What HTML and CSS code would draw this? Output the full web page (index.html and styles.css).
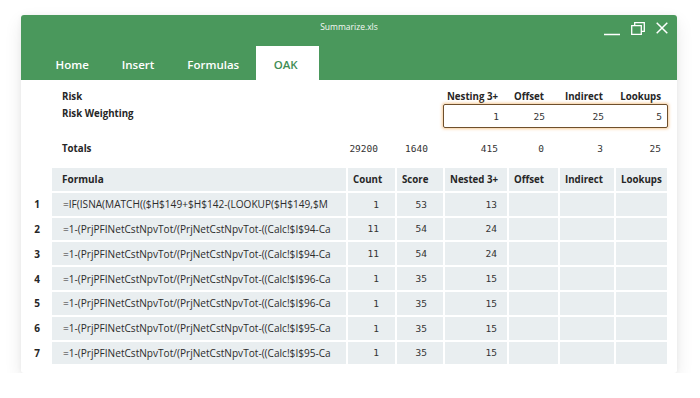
FILE: index.html
```html
<!DOCTYPE html>
<html lang="en">
<head>
<meta charset="utf-8">
<title>Summarize.xls</title>
<link rel="stylesheet" href="styles.css">
</head>
<body>
<div class="window">
  <header class="titlebar">
    <div class="title-row">
      <span></span>
      <span class="title">Summarize.xls</span>
      <div class="controls">
        <svg class="ic-min" width="16" height="14" viewBox="0 0 16 14"><path d="M0 12.5H16" stroke="#fff" stroke-width="1.3" fill="none"/></svg>
        <svg class="ic-restore" width="14" height="13" viewBox="0 0 14 13"><path d="M0.7 3.7H10.3V12.3H0.7Z M3.7 3.7V0.7H13.3V9.3H10.3" stroke="#fff" stroke-width="1.3" fill="none"/></svg>
        <svg class="ic-close" width="12" height="12" viewBox="0 0 12 12"><path d="M0.7 0.7L11.3 11.3M11.3 0.7L0.7 11.3" stroke="#fff" stroke-width="1.5" fill="none"/></svg>
      </div>
    </div>
    <nav class="tabs">
      <span class="tab">Home</span>
      <span class="tab">Insert</span>
      <span class="tab">Formulas</span>
      <span class="tab active">OAK</span>
    </nav>
  </header>
  <main class="sheet">
    <div class="summary">
      <span class="lbl">Risk</span>
      <span></span><span></span>
      <span class="hd">Nesting 3+</span>
      <span class="hd">Offset</span>
      <span class="hd">Indirect</span>
      <span class="hd">Lookups</span>

      <span class="lbl lbl-top">Risk Weighting</span>
      <span></span><span></span>
      <div class="weights">
        <span class="num">1</span>
        <span class="num">25</span>
        <span class="num">25</span>
        <span class="num">5</span>
      </div>

      <span class="lbl totals">Totals</span>
      <span class="num totals">29200</span>
      <span class="num totals">1640</span>
      <span class="num totals">415</span>
      <span class="num totals">0</span>
      <span class="num totals">3</span>
      <span class="num totals">25</span>
    </div>

    <div class="table">
      <span class="rn"></span>
      <span class="th th-formula">Formula</span>
      <span class="th">Count</span>
      <span class="th">Score</span>
      <span class="th">Nested 3+</span>
      <span class="th">Offset</span>
      <span class="th">Indirect</span>
      <span class="th">Lookups</span>

      <span class="rn">1</span>
      <span class="td formula">=IF(ISNA(MATCH(($H$149+$H$142-(LOOKUP($H$149,$M</span>
      <span class="td n c-count">1</span><span class="td n c-score">53</span><span class="td n c-nest">13</span><span class="td"></span><span class="td"></span><span class="td"></span>

      <span class="rn">2</span>
      <span class="td formula">=1-(PrjPFINetCstNpvTot/(PrjNetCstNpvTot-((Calc!$I$94-Ca</span>
      <span class="td n c-count">11</span><span class="td n c-score">54</span><span class="td n c-nest">24</span><span class="td"></span><span class="td"></span><span class="td"></span>

      <span class="rn">3</span>
      <span class="td formula">=1-(PrjPFINetCstNpvTot/(PrjNetCstNpvTot-((Calc!$I$94-Ca</span>
      <span class="td n c-count">11</span><span class="td n c-score">54</span><span class="td n c-nest">24</span><span class="td"></span><span class="td"></span><span class="td"></span>

      <span class="rn">4</span>
      <span class="td formula">=1-(PrjPFINetCstNpvTot/(PrjNetCstNpvTot-((Calc!$I$96-Ca</span>
      <span class="td n c-count">1</span><span class="td n c-score">35</span><span class="td n c-nest">15</span><span class="td"></span><span class="td"></span><span class="td"></span>

      <span class="rn">5</span>
      <span class="td formula">=1-(PrjPFINetCstNpvTot/(PrjNetCstNpvTot-((Calc!$I$96-Ca</span>
      <span class="td n c-count">1</span><span class="td n c-score">35</span><span class="td n c-nest">15</span><span class="td"></span><span class="td"></span><span class="td"></span>

      <span class="rn">6</span>
      <span class="td formula">=1-(PrjPFINetCstNpvTot/(PrjNetCstNpvTot-((Calc!$I$95-Ca</span>
      <span class="td n c-count">1</span><span class="td n c-score">35</span><span class="td n c-nest">15</span><span class="td"></span><span class="td"></span><span class="td"></span>

      <span class="rn">7</span>
      <span class="td formula">=1-(PrjPFINetCstNpvTot/(PrjNetCstNpvTot-((Calc!$I$95-Ca</span>
      <span class="td n c-count">1</span><span class="td n c-score">35</span><span class="td n c-nest">15</span><span class="td"></span><span class="td"></span><span class="td"></span>
    </div>
  </main>
</div>
</body>
</html>
```

FILE: styles.css
```css
* { box-sizing: border-box; }

html, body {
  margin: 0;
  padding: 0;
  background: #ffffff;
}

body {
  font-family: "Open Sans", "Noto Sans", sans-serif;
  color: #262626;
}

.window {
  margin: 15px 0 0 21px;
  width: 656px;
  height: 358px;
  background: #fff;
  border-radius: 3px;
  box-shadow: 0 7px 18px rgba(0, 0, 0, 0.09), 0 0 5px rgba(0, 0, 0, 0.05);
  overflow: hidden;
}

.titlebar {
  background: #4a985c;
  height: 65px;
  display: flex;
  flex-direction: column;
}

.title-row {
  height: 31px;
  display: grid;
  grid-template-columns: 1fr auto 1fr;
  align-items: start;
}

.title {
  color: #fff;
  font-size: 8.5px;
  margin-top: 6px;
  opacity: 0.95;
}

.controls {
  justify-self: end;
  display: flex;
  align-items: flex-start;
  gap: 11px;
  margin-top: 7px;
  margin-right: 9px;
}

.controls svg { display: block; }

.tabs {
  height: 34px;
  display: flex;
  padding-left: 18px;
}

.tab {
  display: flex;
  align-items: center;
  padding: 2px 16.5px 0;
  color: #fff;
  font-size: 11.5px;
  font-weight: 600;
}

.tab.active {
  background: #fff;
  color: #3f8d55;
  padding: 2px 21px 0 18px;
}

.sheet {
  padding: 9px 0 0 3px;
}

.summary {
  display: grid;
  grid-template-columns: 278px 48px 50px 70px 46px 59px 58px;
  grid-template-rows: 15px 24px auto;
  padding-left: 28px;
  font-size: 9.7px;
}

.lbl {
  font-weight: 700;
  padding-left: 10px;
  line-height: 15px;
}

.lbl-top {
  line-height: 20px;
}

.hd {
  font-weight: 700;
  text-align: right;
  line-height: 15px;
}

.num {
  font-family: "DejaVu Sans Mono", monospace;
  font-size: 9.5px;
  text-align: right;
  color: #333;
}

.totals {
  margin-top: 11px;
  line-height: 20px;
}

.weights {
  grid-column: 4 / 8;
  display: grid;
  grid-template-columns: 55px 46px 59px 58px;
  align-items: center;
  margin-left: 15px;
  margin-right: -7px;
  padding-right: 6px;
  border: 1.5px solid #6e4f2c;
  border-radius: 2px;
  box-shadow: 0 0 3px 1px rgba(240, 160, 70, 0.55);
}

.table {
  margin-top: 9px;
  display: grid;
  grid-template-columns: 26px 294px 47px 46px 62px 49px 54px 51px;
  grid-auto-rows: 22.8px;
  gap: 2px;
  font-size: 9.7px;
}

.rn {
  font-weight: 700;
  display: flex;
  align-items: center;
  justify-content: center;
  font-size: 10px;
}

.th, .td {
  background: #e9eef0;
  display: flex;
  align-items: center;
  white-space: nowrap;
  overflow: hidden;
}

.th {
  font-weight: 700;
  padding-left: 5px;
}

.th-formula {
  padding-left: 10px;
  font-size: 10px;
}

.formula {
  padding-left: 11px;
  font-size: 10.1px;
  color: #2c2c2c;
}

.n {
  font-family: "DejaVu Sans Mono", monospace;
  font-size: 9.5px;
  justify-content: flex-end;
  color: #333;
}

.c-count, .c-score { padding-right: 16px; }
.c-nest { padding-right: 10px; }
```
